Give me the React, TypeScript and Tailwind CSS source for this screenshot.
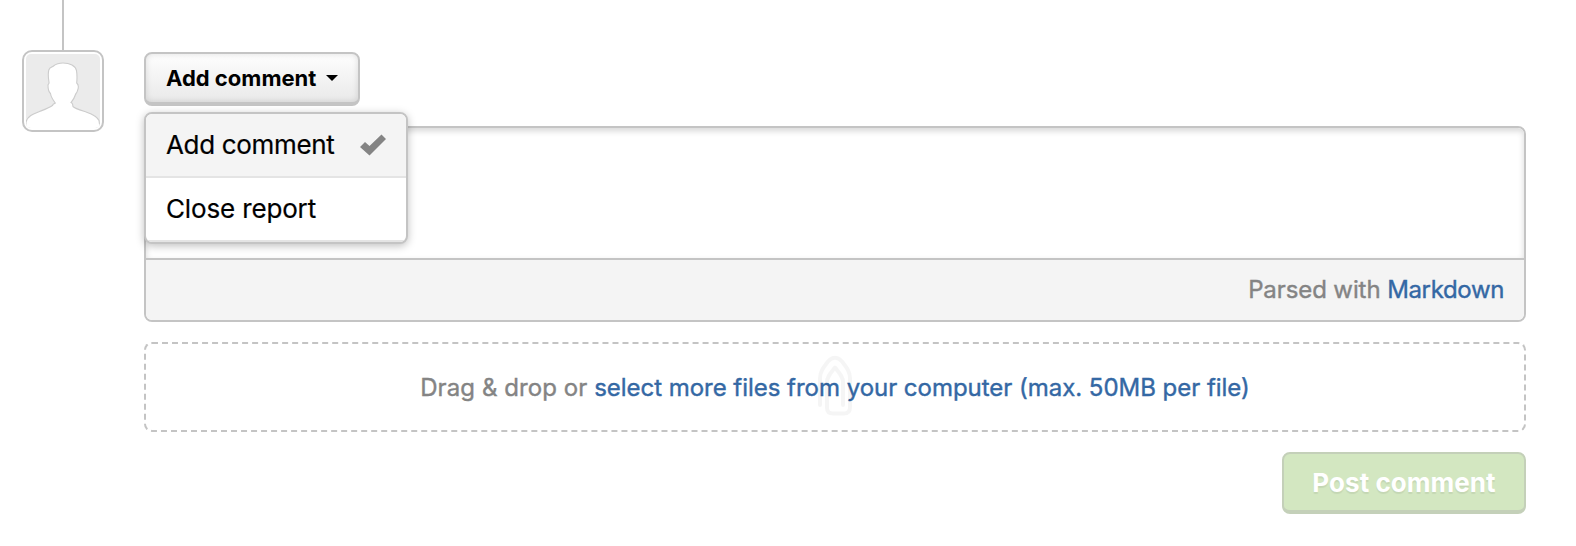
function Avatar() {
  return (
    <div className="flex w-[82px] shrink-0 flex-col items-center">
      <div className="h-[50px] w-[2px] bg-[#c4c4c4]" />
      <div className="h-[82px] w-[82px] rounded-[10px] border-2 border-[#c4c4c4] bg-white p-[2px]">
        <svg viewBox="0 0 74 74" className="block h-[74px] w-[74px] rounded-[5px] bg-[#ebebeb]">
          <path
            d="M0 74V68C1.500 62 7 60 14 57.300C20 55 24 53.500 26.700 51.300C26.500 50 28 50 29.300 49C27 46 25 43 24.500 39.500C22.800 38 22 34 22 31.300C22 29.500 23.500 30 23 28.300C22.300 24 22 19 22.800 16C24 13 26 13.500 27.500 12C30 10 34 9 37 9C44 9 49.500 12 50.500 16.700C51.200 21 51 26 50.700 29C52.500 30.500 52.500 34 51.500 36.500C51 39 49.800 39 49.300 41C48.500 44 46.500 46.500 45 48.500C47.500 49.500 46.300 50.500 47 52.500C49 54.500 55 56.300 60.700 58.300C67 60.500 71 62.500 73 66.500L74 74Z"
            fill="#fff"
            stroke="#cccccc"
            strokeWidth="1.1"
          />
          <path d="M0 74V70.500H74V74Z" fill="#fff" />
        </svg>
      </div>
    </div>
  );
}

function ActionMenu() {
  return (
    <div className="absolute left-0 top-[60px] z-10 w-[264px] overflow-hidden rounded-[8px] border-2 border-[#c4c4c4] bg-white text-[26px] leading-[62px] text-black shadow-[0_2px_8px_rgba(0,0,0,0.25)] [-webkit-text-stroke:0.2px_currentColor]">
      <div className="flex h-[64px] items-center border-b-2 border-[#e4e4e4] bg-[#f4f4f4] pl-[20px] pr-[20px]">
        <span className="whitespace-nowrap tracking-[-0.33px]">Add comment</span>
        <svg viewBox="0 0 26 22" className="ml-auto h-[22px] w-[26px]">
          <path d="M0 13L5 8L9.500 12L21.500 0.500L26 5L9.500 21.500Z" fill="#848484" />
        </svg>
      </div>
      <div className="flex h-[64px] items-center border-b-2 border-[#e4e4e4] px-[20px]">
        <span className="whitespace-nowrap tracking-[-0.15px]">Close report</span>
      </div>
    </div>
  );
}

function ActionSelect() {
  return (
    <div className="relative w-[216px]">
      <button className="flex h-[54px] w-[216px] items-center rounded-[8px] border-2 border-b-4 border-[#c4c4c4] bg-linear-to-b from-[#fefefe] to-[#e9e9e9] pl-[20px] text-[22px] font-bold leading-none text-black shadow-[inset_0_0_6px_rgba(0,0,0,0.12)]">
        <span className="whitespace-nowrap">Add comment</span>
        <svg viewBox="0 0 12 6" className="ml-auto mr-[20px] h-[6px] w-[12px]">
          <path d="M0 0H12L6 6Z" fill="#000" />
        </svg>
      </button>
      <ActionMenu />
    </div>
  );
}

export default function App() {
  return (
    <main className="flex h-[546px] w-[1576px] overflow-hidden bg-white pl-[22px] font-['Inter',sans-serif]">
      <Avatar />
      <form className="ml-[40px] flex w-[1382px] flex-col pt-[52px]">
        <ActionSelect />
        <section className="mt-[20px] h-[196px] overflow-hidden rounded-[8px] border-2 border-[#c4c4c4]">
          <div className="h-[130px] bg-white shadow-[inset_0_3px_6px_rgba(0,0,0,0.16)]" />
          <div className="flex h-[62px] items-center justify-end border-t-2 border-[#c4c4c4] bg-[#f4f4f4] pr-[20px] text-[24px] text-[#848484] [-webkit-text-stroke:0.4px_currentColor]">
            <span className="whitespace-nowrap tracking-[-0.1px]">
              Parsed with <a className="tracking-[-0.35px] text-[#3468a4] [-webkit-text-stroke:0.4px_currentColor]">Markdown</a>
            </span>
          </div>
        </section>
        <section className="relative mt-[20px] flex h-[90px] items-center justify-center rounded-[8px] border-2 border-dashed border-[#c4c4c4] pt-[2px] text-[24px] text-[#848484] [-webkit-text-stroke:0.4px_currentColor]">
          <span className="whitespace-nowrap tracking-[0.07px]">
            Drag &amp; drop or{" "}
            <a className="tracking-[-0.03px] text-[#3468a4] [-webkit-text-stroke:0.4px_currentColor]">
              select more files from your computer (max. 50MB per file)
            </a>
          </span>
          <svg
            viewBox="0 0 36 62"
            className="absolute left-[672px] top-[11px] h-[62px] w-[36px]"
            fill="none"
            stroke="#000"
            strokeOpacity="0.04"
            strokeWidth="4"
            strokeLinecap="round"
            strokeLinejoin="round"
          >
            <path d="M2 50V23C2 17 5 13 10 6.500C14.500 1.500 19.500 1.500 24 6.500C29 13 32 17 32 23V52C32 56 30 58.500 26 58.500H15C11 58.500 9 57 9 53V27C9 22 12 19 17 12.500C22 19 25 22 25 27V50" />
          </svg>
        </section>
        <button className="mt-[20px] flex h-[62px] w-[244px] items-center justify-center self-end rounded-[8px] border-2 border-b-4 border-[#c4d0b9] bg-[#d3e7c1] pt-[2px] text-[26px] font-bold leading-none text-white [text-shadow:0_2px_1px_rgba(0,0,0,0.07)]">
          <span className="whitespace-nowrap tracking-[0.05px]">Post comment</span>
        </button>
      </form>
    </main>
  );
}
